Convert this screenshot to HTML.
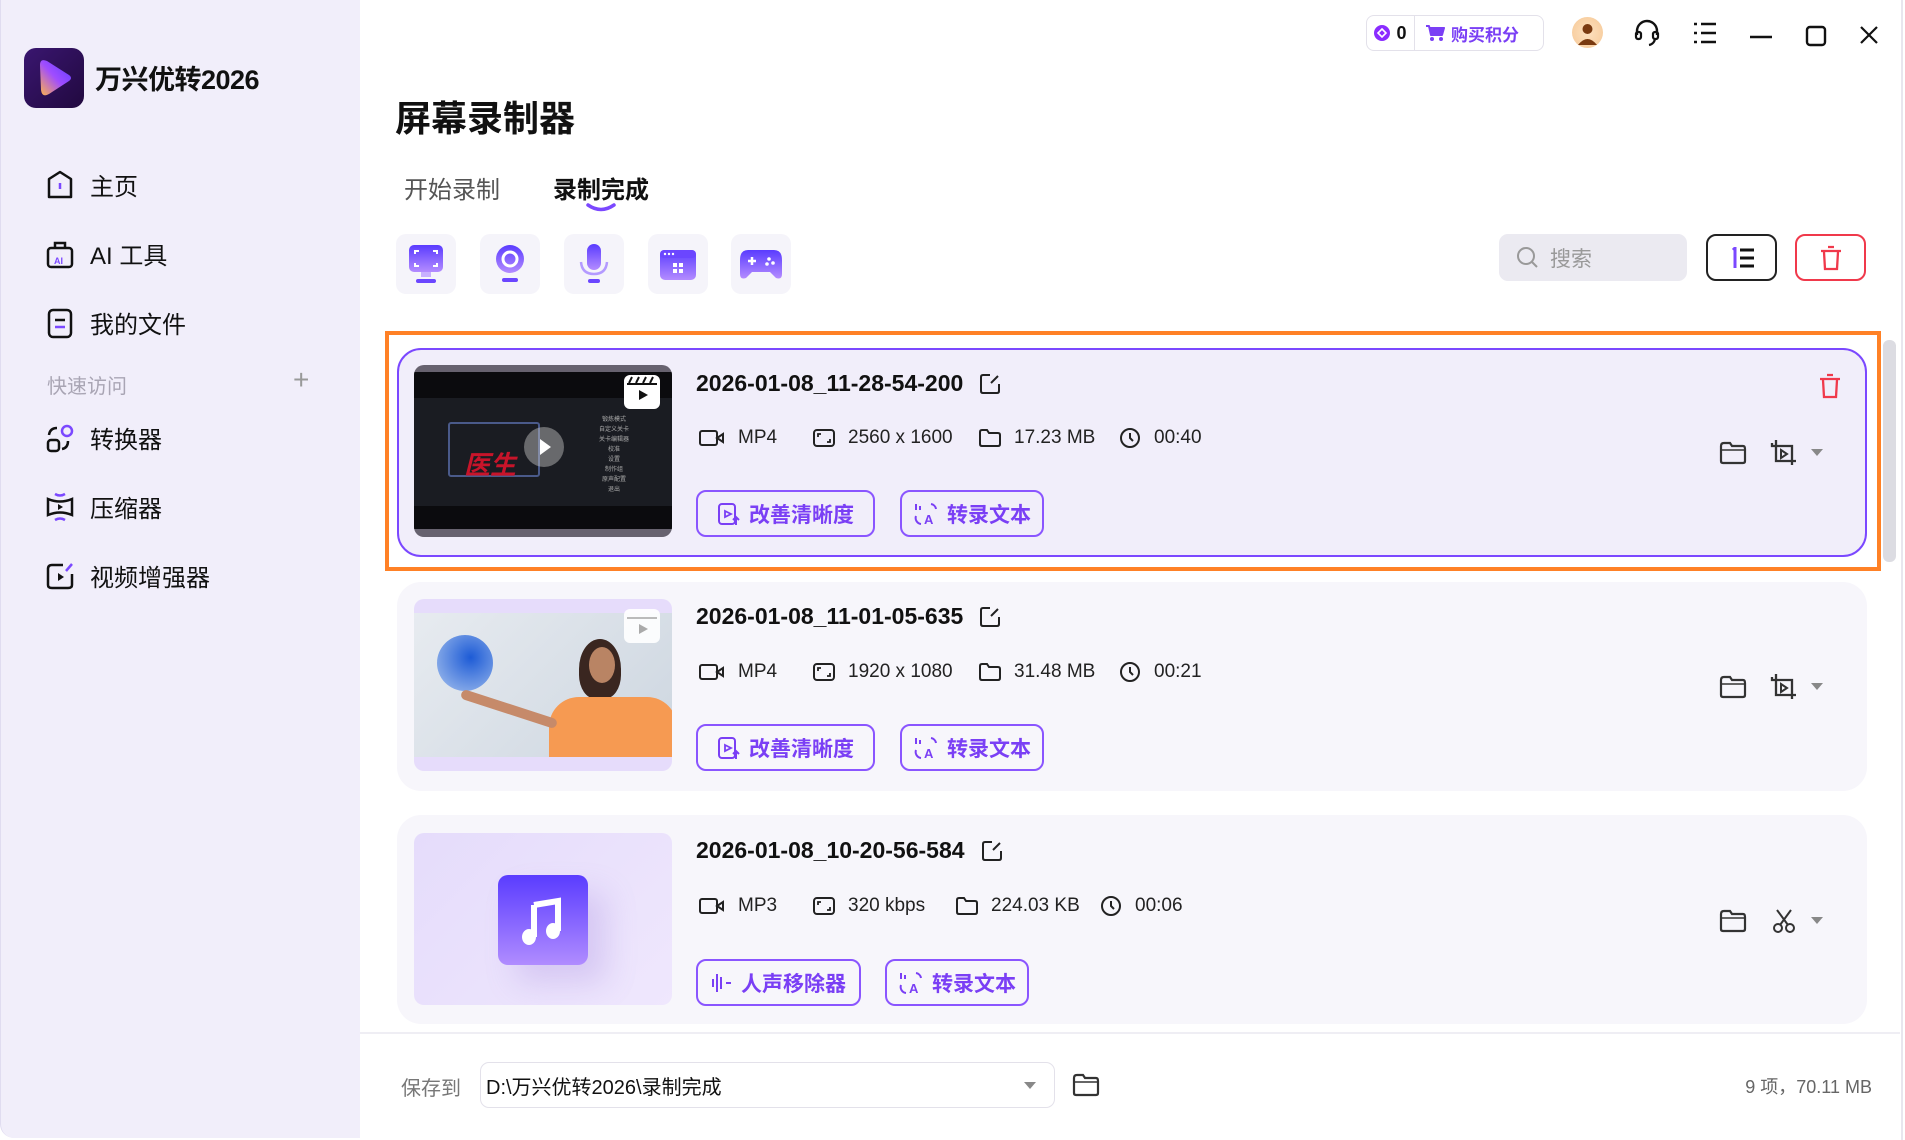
<!DOCTYPE html>
<html><head><meta charset="utf-8"><style>
*{box-sizing:border-box;margin:0;padding:0}
body{width:1905px;height:1140px;overflow:hidden;background:#fff;font-family:"Liberation Sans","Noto Sans CJK SC",sans-serif;color:#111;position:relative}
.a{position:absolute}
.side{left:0;top:0;width:360px;height:1138px;background:#f1eefa;border-radius:0 0 0 14px;border-left:1px solid #e0dcf0}
.nav{left:45px;display:flex;align-items:center;font-size:24px;color:#111}
.nav svg{margin-right:15px}
.tool{width:60px;height:60px;border-radius:10px;background:#f5f4fa;display:flex;align-items:center;justify-content:center}
.card{left:397px;width:1470px;height:207px;border-radius:24px;background:#f7f6fb}
.card.sel{background:#f1eefa;border:2px solid #7b48ff}
.thumb{left:17px;top:17px;width:258px;height:172px;border-radius:10px;overflow:hidden}
.fn{left:299px;top:20px;font-size:23px;font-weight:bold;display:flex;align-items:center}
.fn svg{margin-left:16px}
.meta{top:79px;font-size:19px;color:#222;display:flex;align-items:center}
.meta svg{margin-right:13px}
.btn{top:142px;height:47px;border:2px solid #8a55ff;border-radius:10px;display:flex;align-items:center;justify-content:center;color:#7a3ff5;font-size:21px;font-weight:bold;gap:8px;background:transparent}
</style></head><body>

<div class="a side"></div>
<div class="a" style="left:24px;top:48px;width:60px;height:60px;border-radius:12px;background:linear-gradient(135deg,#3a1670,#21093f)">
<svg width="60" height="60" viewBox="0 0 60 60"><defs><linearGradient id="lg" x1="0" y1="1" x2="1" y2="0"><stop offset="0" stop-color="#ffb34a"/><stop offset=".5" stop-color="#a04dff"/><stop offset="1" stop-color="#5b3cff"/></linearGradient></defs><path d="M16 17 Q16 10 23 13 L45 27 Q49 30 45 33 L25 46 Q18 50 17 42 Z" fill="url(#lg)"/></svg></div>
<div class="a" style="left:95px;top:58px;font-size:27px;font-weight:bold;letter-spacing:-0.5px">万兴优转2026</div>

<div class="a nav" style="top:167px"><svg width="30" height="32" viewBox="0 0 30 32"><path d="M4 10 L15 3 L26 10 V28 H4 Z" fill="none" stroke="#111" stroke-width="2.5" stroke-linejoin="round"/><path d="M15 14v6" stroke="#7b48ff" stroke-width="2.5"/></svg>主页</div>
<div class="a nav" style="top:236px"><svg width="30" height="32" viewBox="0 0 30 32"><rect x="3" y="10" width="24" height="19" rx="3" fill="none" stroke="#111" stroke-width="2.5"/><path d="M10 10V5h10v5" fill="none" stroke="#111" stroke-width="2.5"/><text x="9" y="26" font-size="9" fill="#7b48ff" font-family="Liberation Sans" font-weight="bold">AI</text></svg>AI 工具</div>
<div class="a nav" style="top:305px"><svg width="30" height="32" viewBox="0 0 30 32"><rect x="4" y="3" width="22" height="27" rx="4" fill="none" stroke="#111" stroke-width="2.5"/><path d="M10 13h10" stroke="#111" stroke-width="2.5"/><path d="M10 20h10" stroke="#7b48ff" stroke-width="2.5"/></svg>我的文件</div>
<div class="a" style="left:47px;top:370px;font-size:20px;color:#a9a5b4">快速访问</div>
<div class="a" style="left:293px;top:364px;font-size:28px;color:#999;font-weight:200">+</div>
<div class="a nav" style="top:420px"><svg width="30" height="32" viewBox="0 0 30 32"><circle cx="22" cy="9" r="5" fill="none" stroke="#7b48ff" stroke-width="2.5"/><rect x="3" y="18" width="11" height="11" rx="3" fill="none" stroke="#111" stroke-width="2.5"/><path d="M4 13 Q5 6 12 6 M23 19 Q23 26 17 27" fill="none" stroke="#111" stroke-width="2.5"/></svg>转换器</div>
<div class="a nav" style="top:489px"><svg width="30" height="32" viewBox="0 0 30 32"><path d="M3 8 Q15 13 27 8 V24 Q15 19 3 24 Z" fill="none" stroke="#111" stroke-width="2.5"/><path d="M13 13 L18 16 L13 19Z" fill="#111"/><path d="M10 3 Q15 6 20 3 M10 29 Q15 26 20 29" fill="none" stroke="#7b48ff" stroke-width="2.5"/></svg>压缩器</div>
<div class="a nav" style="top:558px"><svg width="30" height="32" viewBox="0 0 30 32"><path d="M18 5 H7 Q3 5 3 9 V25 Q3 28 7 28 H23 Q27 28 27 25 V14" fill="none" stroke="#111" stroke-width="2.5"/><path d="M13 13 L19 17 L13 21Z" fill="#111"/><path d="M21 11 L27 4" stroke="#7b48ff" stroke-width="2.5"/></svg>视频增强器</div>

<div class="a" style="left:1366px;top:15px;width:178px;height:36px;border:1px solid #e3e1ea;border-radius:8px;display:flex;align-items:center">
<div style="width:48px;display:flex;align-items:center;justify-content:center;gap:6px;border-right:1px solid #e3e1ea;height:100%"><svg width="16" height="16"><circle cx="8" cy="8" r="8" fill="#8a2cff"/><path d="M8 4 L12 8 L8 12 L4 8Z" fill="none" stroke="#fff" stroke-width="1.6"/></svg><b style="font-size:18px">0</b></div>
<div style="padding-left:10px;display:flex;align-items:center;gap:6px;color:#7a3ff5;font-weight:bold;font-size:17px"><svg width="20" height="18" viewBox="0 0 20 18"><path d="M1 2h3l2 9h11l2-7H5" fill="#7a3ff5" stroke="#7a3ff5" stroke-width="2" stroke-linejoin="round"/><circle cx="7" cy="15" r="2" fill="#7a3ff5"/><circle cx="16" cy="15" r="2" fill="#7a3ff5"/></svg>购买积分</div></div>
<div class="a" style="left:1572px;top:17px;width:31px;height:31px;border-radius:50%;background:radial-gradient(circle,#fde1c0,#f6c896)"><svg width="31" height="31"><circle cx="15.5" cy="12" r="5" fill="#7a3a10"/><path d="M6 28 Q15.5 16 25 28Z" fill="#7a3a10"/></svg></div>
<svg class="a" style="left:1633px;top:18px" width="28" height="30" viewBox="0 0 28 30"><path d="M4 17 V13 A10 10 0 0 1 24 13 V17" fill="none" stroke="#111" stroke-width="2.4"/><rect x="3" y="14" width="5" height="7" rx="2" fill="none" stroke="#111" stroke-width="2.2"/><rect x="20" y="14" width="5" height="7" rx="2" fill="none" stroke="#111" stroke-width="2.2"/><path d="M22 21 Q21 26 16 27" fill="none" stroke="#111" stroke-width="2.2"/></svg>
<svg class="a" style="left:1693px;top:21px" width="24" height="24"><g stroke="#111" stroke-width="2.4"><path d="M1 3h3M8 3h15M1 12h3M8 12h15M1 21h3M8 21h15"/></g></svg>
<svg class="a" style="left:1749px;top:25px" width="24" height="24"><path d="M1 12h22" stroke="#111" stroke-width="2.4"/></svg>
<svg class="a" style="left:1805px;top:25px" width="22" height="22"><rect x="2" y="2" width="18" height="18" rx="3" fill="none" stroke="#111" stroke-width="2.4"/></svg>
<svg class="a" style="left:1859px;top:25px" width="20" height="20"><path d="M2 2L18 18M18 2L2 18" stroke="#111" stroke-width="2.2"/></svg>
<div class="a" style="right:2px;top:0;width:2px;height:1140px;background:#e8e6ee"></div>

<div class="a" style="left:395px;top:90px;font-size:36px;font-weight:bold">屏幕录制器</div>
<div class="a" style="left:404px;top:170px;font-size:24px;color:#555">开始录制</div>
<div class="a" style="left:553px;top:170px;font-size:24px;font-weight:bold">录制完成</div>
<svg class="a" style="left:585px;top:202px" width="32" height="10"><path d="M3 3 Q16 12 29 3" fill="none" stroke="#7b48ff" stroke-width="3.5" stroke-linecap="round"/></svg>

<svg width="0" height="0" style="position:absolute"><defs><linearGradient id="pg" x1="0" y1="0" x2="0" y2="1"><stop offset="0" stop-color="#5a3cff"/><stop offset="1" stop-color="#b48cff"/></linearGradient></defs></svg>
<div class="a tool" style="left:396px;top:234px"><svg width="40" height="44"><rect x="3" y="3" width="34" height="27" rx="5" fill="url(#pg)"/><path d="M9 12V9h4M27 9h4v3M9 21v3h4M27 24h4v-3" fill="none" stroke="#fff" stroke-width="2"/><rect x="15" y="30" width="10" height="5" fill="#c8b0ff"/><rect x="10" y="37" width="20" height="4" rx="2" fill="#6b46ff"/></svg></div>
<div class="a tool" style="left:480px;top:234px"><svg width="40" height="44"><circle cx="20" cy="17" r="14" fill="url(#pg)"/><circle cx="20" cy="17" r="7" fill="none" stroke="#fff" stroke-width="3"/><rect x="12" y="36" width="16" height="4" rx="2" fill="#6b46ff"/></svg></div>
<div class="a tool" style="left:564px;top:234px"><svg width="40" height="44"><rect x="13" y="2" width="14" height="26" rx="7" fill="url(#pg)"/><path d="M7 20 Q8 32 20 32 Q32 32 33 20" fill="none" stroke="#b49aff" stroke-width="2.5"/><rect x="14" y="37" width="12" height="4" rx="2" fill="#6b46ff"/></svg></div>
<div class="a tool" style="left:648px;top:234px"><svg width="40" height="40"><rect x="2" y="6" width="36" height="30" rx="5" fill="url(#pg)"/><rect x="2" y="6" width="36" height="8" rx="4" fill="#6b46ff"/><circle cx="7" cy="10" r="1.2" fill="#fff"/><circle cx="11" cy="10" r="1.2" fill="#fff"/><circle cx="15" cy="10" r="1.2" fill="#fff"/><rect x="15" y="19" width="4" height="4" fill="#fff"/><rect x="21" y="19" width="4" height="4" fill="#fff"/><rect x="15" y="25" width="4" height="4" fill="#fff"/><rect x="21" y="25" width="4" height="4" fill="#fff"/></svg></div>
<div class="a tool" style="left:731px;top:234px"><svg width="46" height="36"><path d="M10 4 H36 Q44 4 44 14 L44 28 Q44 34 38 32 L32 26 H14 L8 32 Q2 34 2 28 L2 14 Q2 4 10 4Z" fill="url(#pg)"/><path d="M10 15h8M14 11v8" stroke="#fff" stroke-width="2.5"/><circle cx="31" cy="13" r="1.8" fill="#fff"/><circle cx="35" cy="17" r="1.8" fill="#fff"/><circle cx="29" cy="18" r="1.8" fill="#fff"/></svg></div>

<div class="a" style="left:1499px;top:234px;width:188px;height:47px;border-radius:9px;background:#ebeaf1;display:flex;align-items:center;padding-left:17px;color:#999;font-size:21px"><svg width="24" height="24" style="margin-right:10px"><circle cx="10" cy="10" r="8" fill="none" stroke="#999" stroke-width="2"/><path d="M16 16l5 5" stroke="#999" stroke-width="2"/></svg>搜索</div>
<div class="a" style="left:1706px;top:234px;width:71px;height:47px;border:2px solid #222;border-radius:10px;display:flex;align-items:center;justify-content:center"><svg width="26" height="22"><path d="M4 3 L6 1 V21" stroke="#7b48ff" stroke-width="3" fill="none"/><path d="M11 3h14M11 11h14M11 19h14" stroke="#111" stroke-width="3"/></svg></div>
<div class="a" style="left:1795px;top:234px;width:71px;height:47px;border:2px solid #f0394b;border-radius:10px;display:flex;align-items:center;justify-content:center"><svg width="24" height="26"><path d="M2 6h20M9 2h6M5 7 L6 24 H18 L19 7" fill="none" stroke="#f0394b" stroke-width="2.3"/></svg></div>

<div class="a" style="left:1883px;top:340px;width:13px;height:222px;background:#dcdce2;border-radius:6px"></div>

<div class="a" style="left:385px;top:331px;width:1496px;height:240px;border:4px solid #ff8126"></div>

<div class="a card sel" style="top:348px;height:209px">
 <div class="a thumb" style="left:15px;top:15px;background:#67626f">
  <div class="a" style="left:0;top:7px;width:258px;height:157px;background:#0b0b0e"></div>
  <div class="a" style="left:0;top:33px;width:258px;height:108px;background:#1a1c22"></div>
  <div class="a" style="left:34px;top:57px;width:92px;height:55px;border:2px solid #4a5a8a;border-radius:3px"></div>
  <div class="a" style="left:50px;top:80px;color:#c8142a;font-size:26px;font-weight:bold;font-style:italic">医生</div>
  <div class="a" style="left:110px;top:62px;width:40px;height:40px;border-radius:50%;background:rgba(200,200,200,.45)"><svg width="40" height="40"><path d="M16 12l11 8-11 8z" fill="#fff"/></svg></div>
  <div class="a" style="left:180px;top:50px;width:40px;height:80px;font-size:6px;color:#aaa;line-height:10px;text-align:center">锻炼模式<br>自定义关卡<br>关卡编辑器<br>校准<br>设置<br>制作组<br>原声配置<br>退出</div>
  <div class="a" style="left:210px;top:10px;width:36px;height:34px;background:#fff;border-radius:6px"><svg width="36" height="34"><path d="M3 9h30" stroke="#111" stroke-width="2"/><path d="M8 2l-3 6M15 2l-3 6M22 2l-3 6M29 2l-3 6" stroke="#111" stroke-width="2"/><path d="M15 15l9 5-9 5z" fill="#111"/></svg></div>
 </div>
 <div class="a fn" style="left:297px;top:20px">2026-01-08_11-28-54-200<svg width="22" height="22"><path d="M11 2H4Q2 2 2 4V18Q2 20 4 20H18Q20 20 20 18V11M19 3l-7 7" fill="none" stroke="#222" stroke-width="2"/></svg></div>
 <div class="a meta" style="left:300px;top:77px"><svg width="26" height="18"><rect x="1" y="2" width="17" height="14" rx="2" fill="none" stroke="#222" stroke-width="2"/><path d="M18 9l6-4v8z" fill="none" stroke="#222" stroke-width="2"/></svg>MP4</div>
 <div class="a meta" style="left:414px;top:77px"><svg width="22" height="20"><rect x="1" y="2" width="20" height="16" rx="3" fill="none" stroke="#222" stroke-width="2"/><path d="M5 9V6h3M17 11v3h-3" fill="none" stroke="#222" stroke-width="1.8"/></svg>2560 x 1600</div>
 <div class="a meta" style="left:580px;top:77px"><svg width="22" height="20"><path d="M1 4Q1 2 3 2H8L10 5H19Q21 5 21 7V16Q21 18 19 18H3Q1 18 1 16Z" fill="none" stroke="#222" stroke-width="2"/></svg>17.23 MB</div>
 <div class="a meta" style="left:720px;top:77px"><svg width="22" height="22"><circle cx="11" cy="11" r="9" fill="none" stroke="#222" stroke-width="2"/><path d="M11 6v5l3 3" fill="none" stroke="#222" stroke-width="2"/></svg>00:40</div>
 <div class="a btn" style="left:297px;top:140px;width:179px"><svg width="24" height="24"><rect x="2" y="2" width="16" height="20" rx="3" fill="none" stroke="#7a3ff5" stroke-width="2"/><path d="M8 9l6 3-6 3z" fill="none" stroke="#7a3ff5" stroke-width="1.8"/><path d="M19 23v-8M16 18l3-3 3 3" fill="none" stroke="#7a3ff5" stroke-width="2"/></svg>改善清晰度</div>
 <div class="a btn" style="left:501px;top:140px;width:144px"><svg width="26" height="24"><path d="M3 2v6M7 4v4M18 2a6 6 0 0 1 5 5M3 14a6 6 0 0 0 5 8" fill="none" stroke="#7a3ff5" stroke-width="2"/><text x="11" y="22" font-size="13" fill="#7a3ff5" font-family="Liberation Sans" font-weight="bold">A</text></svg>转录文本</div>
 <svg class="a" style="left:1419px;top:23px" width="24" height="26"><path d="M2 6h20M9 2h6M5 7 L6 24 H18 L19 7" fill="none" stroke="#f0394b" stroke-width="2.3"/></svg>
</div>

<svg class="a" style="left:1719px;top:441px" width="28" height="24"><path d="M2 5Q2 2 5 2H11L13 5H24Q26 5 26 8V20Q26 22 24 22H4Q2 22 2 20Z" fill="none" stroke="#333" stroke-width="2.2"/><path d="M2 9h24" stroke="#333" stroke-width="1.5"/></svg>
<svg class="a" style="left:1769px;top:439px" width="30" height="28"><path d="M3 4v3h20v19M7 1v21h20" fill="none" stroke="#333" stroke-width="2.3"/><path d="M12 11l6 4-6 4z" fill="none" stroke="#333" stroke-width="2"/></svg>
<svg class="a" style="left:1810px;top:448px" width="14" height="10"><path d="M1 1h12L7 8z" fill="#888"/></svg>

<div class="a card" style="top:582px;height:209px">
 <div class="a thumb" style="left:17px;top:17px;background:#e6dcfb">
  <div class="a" style="left:0;top:14px;width:258px;height:144px;background:linear-gradient(135deg,#e7ebf0,#cdd6e0)"></div>
  <div class="a" style="left:23px;top:36px;width:56px;height:56px;border-radius:50%;background:radial-gradient(circle at 60% 40%,#1d5bd6,#a8c3ee)"></div>
  <div class="a" style="left:165px;top:40px;width:42px;height:60px;border-radius:50% 50% 40% 40%;background:#3a2620"></div>
  <div class="a" style="left:175px;top:48px;width:26px;height:36px;border-radius:50%;background:#b98464"></div>
  <div class="a" style="left:135px;top:98px;width:128px;height:60px;border-radius:30px 30px 0 0;background:#f69a52"></div>
  <div class="a" style="left:45px;top:105px;width:100px;height:10px;border-radius:5px;background:#c68a6a;transform:rotate(18deg)"></div>
  <div class="a" style="left:210px;top:10px;width:36px;height:34px;background:rgba(255,255,255,.9);border-radius:6px"><svg width="36" height="34"><path d="M3 9h30" stroke="#bbb" stroke-width="2"/><path d="M15 15l9 5-9 5z" fill="#aaa"/></svg></div>
 </div>
 <div class="a fn" style="left:299px;top:21px">2026-01-08_11-01-05-635<svg width="22" height="22"><path d="M11 2H4Q2 2 2 4V18Q2 20 4 20H18Q20 20 20 18V11M19 3l-7 7" fill="none" stroke="#222" stroke-width="2"/></svg></div>
 <div class="a meta" style="left:302px"><svg width="26" height="18"><rect x="1" y="2" width="17" height="14" rx="2" fill="none" stroke="#222" stroke-width="2"/><path d="M18 9l6-4v8z" fill="none" stroke="#222" stroke-width="2"/></svg>MP4</div>
 <div class="a meta" style="left:416px"><svg width="22" height="20"><rect x="1" y="2" width="20" height="16" rx="3" fill="none" stroke="#222" stroke-width="2"/><path d="M5 9V6h3M17 11v3h-3" fill="none" stroke="#222" stroke-width="1.8"/></svg>1920 x 1080</div>
 <div class="a meta" style="left:582px"><svg width="22" height="20"><path d="M1 4Q1 2 3 2H8L10 5H19Q21 5 21 7V16Q21 18 19 18H3Q1 18 1 16Z" fill="none" stroke="#222" stroke-width="2"/></svg>31.48 MB</div>
 <div class="a meta" style="left:722px"><svg width="22" height="22"><circle cx="11" cy="11" r="9" fill="none" stroke="#222" stroke-width="2"/><path d="M11 6v5l3 3" fill="none" stroke="#222" stroke-width="2"/></svg>00:21</div>
 <div class="a btn" style="left:299px;width:179px"><svg width="24" height="24"><rect x="2" y="2" width="16" height="20" rx="3" fill="none" stroke="#7a3ff5" stroke-width="2"/><path d="M8 9l6 3-6 3z" fill="none" stroke="#7a3ff5" stroke-width="1.8"/><path d="M19 23v-8M16 18l3-3 3 3" fill="none" stroke="#7a3ff5" stroke-width="2"/></svg>改善清晰度</div>
 <div class="a btn" style="left:503px;width:144px"><svg width="26" height="24"><path d="M3 2v6M7 4v4M18 2a6 6 0 0 1 5 5M3 14a6 6 0 0 0 5 8" fill="none" stroke="#7a3ff5" stroke-width="2"/><text x="11" y="22" font-size="13" fill="#7a3ff5" font-family="Liberation Sans" font-weight="bold">A</text></svg>转录文本</div>
</div>
<svg class="a" style="left:1719px;top:675px" width="28" height="24"><path d="M2 5Q2 2 5 2H11L13 5H24Q26 5 26 8V20Q26 22 24 22H4Q2 22 2 20Z" fill="none" stroke="#333" stroke-width="2.2"/><path d="M2 9h24" stroke="#333" stroke-width="1.5"/></svg>
<svg class="a" style="left:1769px;top:673px" width="30" height="28"><path d="M3 4v3h20v19M7 1v21h20" fill="none" stroke="#333" stroke-width="2.3"/><path d="M12 11l6 4-6 4z" fill="none" stroke="#333" stroke-width="2"/></svg>
<svg class="a" style="left:1810px;top:682px" width="14" height="10"><path d="M1 1h12L7 8z" fill="#888"/></svg>

<div class="a card" style="top:815px;height:209px">
 <div class="a thumb" style="left:17px;top:18px;background:linear-gradient(135deg,#e5dcfb,#efe7fd)">
  <div class="a" style="left:84px;top:42px;width:90px;height:90px;border-radius:10px;background:linear-gradient(180deg,#5a3cff,#b08cff);box-shadow:18px 18px 30px rgba(150,120,220,.25)"><svg width="90" height="90"><path d="M36 30 L60 26 V56" fill="none" stroke="#fff" stroke-width="6"/><path d="M36 30V62" stroke="#fff" stroke-width="6"/><ellipse cx="31" cy="62" rx="7" ry="8" fill="#fff"/><ellipse cx="55" cy="56" rx="7" ry="8" fill="#fff"/></svg></div>
 </div>
 <div class="a fn" style="left:299px;top:22px">2026-01-08_10-20-56-584<svg width="22" height="22"><path d="M11 2H4Q2 2 2 4V18Q2 20 4 20H18Q20 20 20 18V11M19 3l-7 7" fill="none" stroke="#222" stroke-width="2"/></svg></div>
 <div class="a meta" style="left:302px;top:80px"><svg width="26" height="18"><rect x="1" y="2" width="17" height="14" rx="2" fill="none" stroke="#222" stroke-width="2"/><path d="M18 9l6-4v8z" fill="none" stroke="#222" stroke-width="2"/></svg>MP3</div>
 <div class="a meta" style="left:416px;top:80px"><svg width="22" height="20"><rect x="1" y="2" width="20" height="16" rx="3" fill="none" stroke="#222" stroke-width="2"/><path d="M5 9V6h3M17 11v3h-3" fill="none" stroke="#222" stroke-width="1.8"/></svg>320 kbps</div>
 <div class="a meta" style="left:559px;top:80px"><svg width="22" height="20"><path d="M1 4Q1 2 3 2H8L10 5H19Q21 5 21 7V16Q21 18 19 18H3Q1 18 1 16Z" fill="none" stroke="#222" stroke-width="2"/></svg>224.03 KB</div>
 <div class="a meta" style="left:703px;top:80px"><svg width="22" height="22"><circle cx="11" cy="11" r="9" fill="none" stroke="#222" stroke-width="2"/><path d="M11 6v5l3 3" fill="none" stroke="#222" stroke-width="2"/></svg>00:06</div>
 <div class="a btn" style="left:299px;top:144px;width:165px"><svg width="22" height="24"><path d="M2 8v8M6 3v18M10 6v12M15 12h5" stroke="#7a3ff5" stroke-width="2"/></svg>人声移除器</div>
 <div class="a btn" style="left:488px;top:144px;width:144px"><svg width="26" height="24"><path d="M3 2v6M7 4v4M18 2a6 6 0 0 1 5 5M3 14a6 6 0 0 0 5 8" fill="none" stroke="#7a3ff5" stroke-width="2"/><text x="11" y="22" font-size="13" fill="#7a3ff5" font-family="Liberation Sans" font-weight="bold">A</text></svg>转录文本</div>
</div>
<svg class="a" style="left:1719px;top:909px" width="28" height="24"><path d="M2 5Q2 2 5 2H11L13 5H24Q26 5 26 8V20Q26 22 24 22H4Q2 22 2 20Z" fill="none" stroke="#333" stroke-width="2.2"/><path d="M2 9h24" stroke="#333" stroke-width="1.5"/></svg>
<svg class="a" style="left:1772px;top:908px" width="24" height="26"><circle cx="6" cy="20" r="4" fill="none" stroke="#333" stroke-width="2"/><circle cx="18" cy="20" r="4" fill="none" stroke="#333" stroke-width="2"/><path d="M8 17L19 2M16 17L5 2" stroke="#333" stroke-width="2"/></svg>
<svg class="a" style="left:1810px;top:916px" width="14" height="10"><path d="M1 1h12L7 8z" fill="#888"/></svg>

<div class="a" style="left:360px;top:1032px;width:1540px;height:2px;background:#efeef4"></div>
<div class="a" style="left:401px;top:1072px;font-size:20px;color:#777">保存到</div>
<div class="a" style="left:480px;top:1062px;width:575px;height:46px;border:1px solid #e3e1ea;border-radius:9px;display:flex;align-items:center;padding-left:5px;font-size:20px">D:\万兴优转2026\录制完成<svg class="a" style="right:17px;top:18px" width="14" height="10"><path d="M1 1h12L7 8z" fill="#888"/></svg></div>
<svg class="a" style="left:1072px;top:1073px" width="28" height="24"><path d="M2 5Q2 2 5 2H11L13 5H24Q26 5 26 8V20Q26 22 24 22H4Q2 22 2 20Z" fill="none" stroke="#333" stroke-width="2.2"/><path d="M2 9h24" stroke="#333" stroke-width="1.5"/></svg>
<div class="a" style="right:33px;top:1073px;font-size:18px;color:#666">9 项，70.11 MB</div>
</body></html>
